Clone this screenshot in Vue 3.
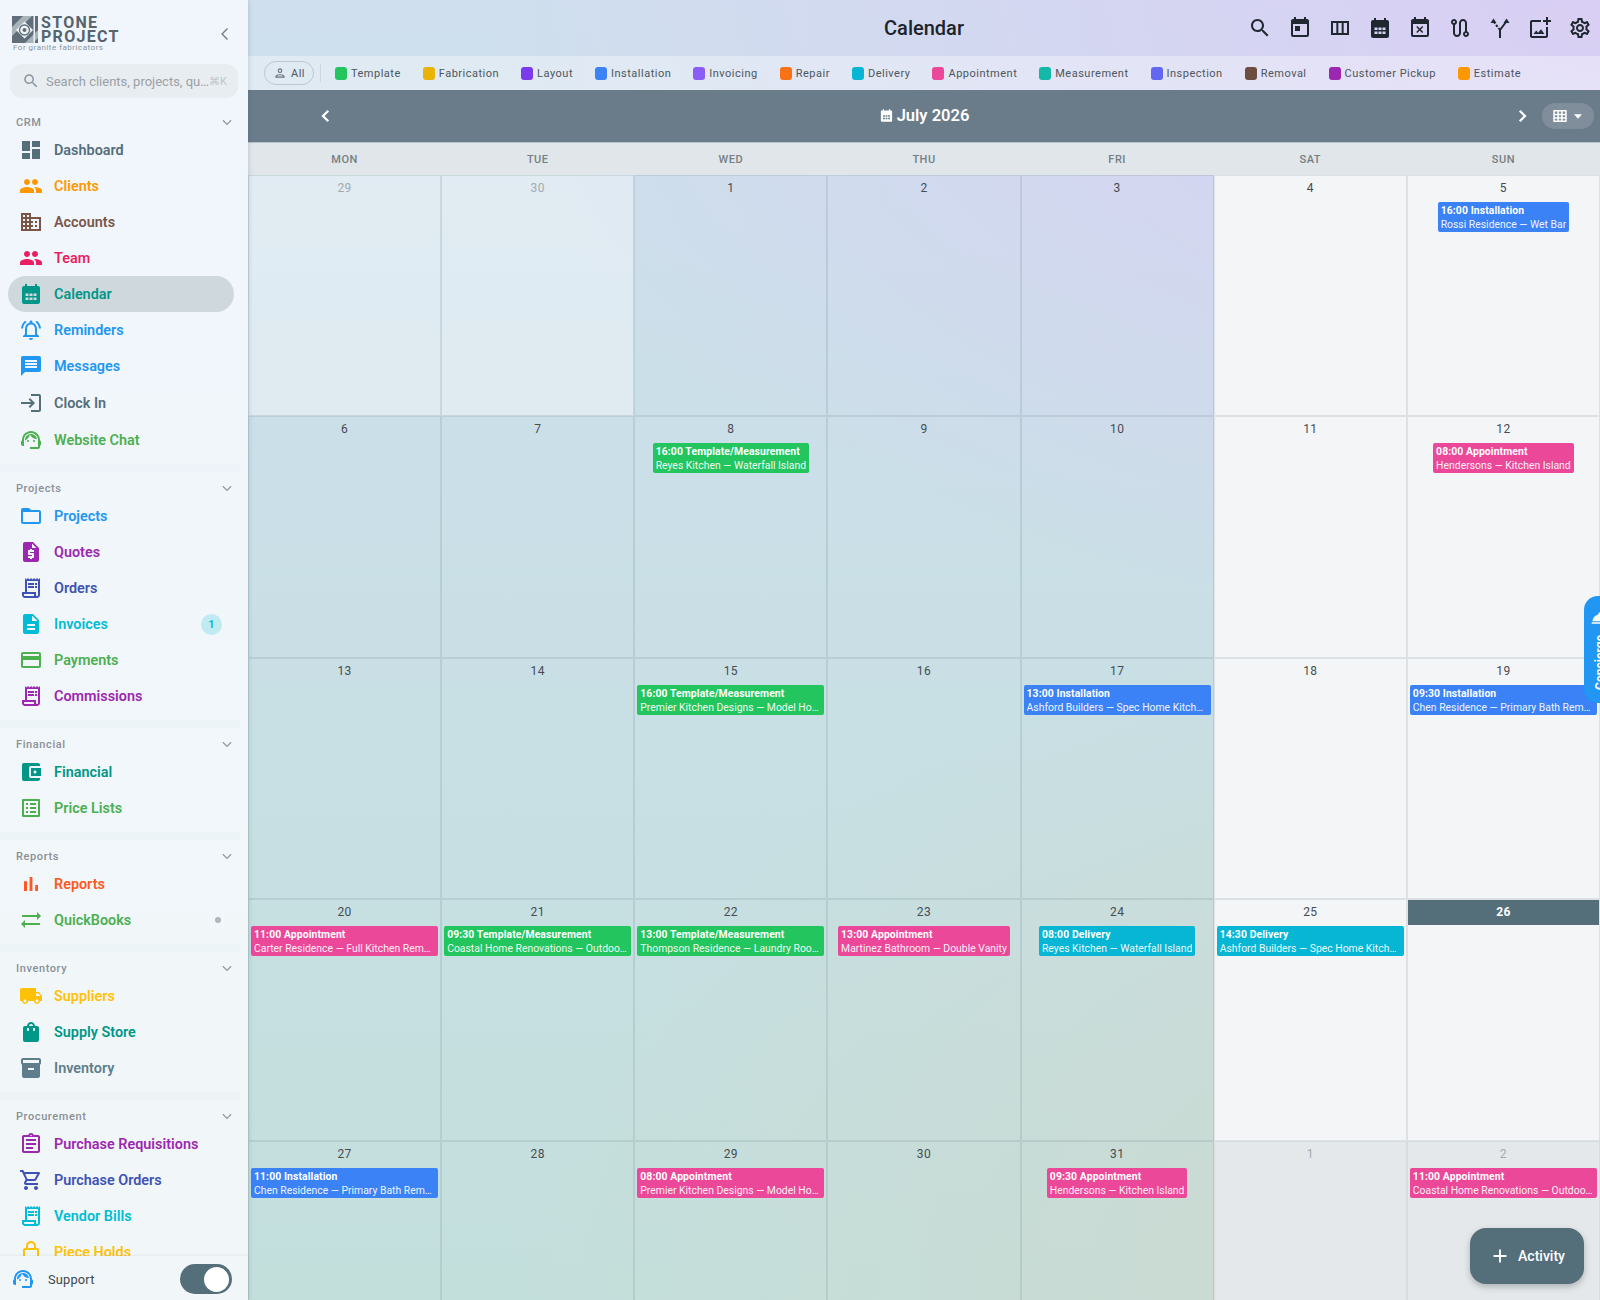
<template>
  <div class="app">
    <aside class="sidebar">
      <div class="brand">
        <svg class="logo-mark" width="26" height="27" viewBox="0 0 26 27">
          <rect width="26" height="27" fill="#5f6e78" />
          <path d="M0 11 11 0h9L0 20z" fill="#a9b3ba" />
          <path d="M26 14 13 27h8l5-5z" fill="#a9b3ba" />
          <path d="M12.500 5.500 21 14l-8.500 8.500L4 14z" fill="#eef3f7" />
          <path d="M21.500 0h1.500v27h-1.500z" fill="#eef3f7" />
          <circle cx="12.500" cy="14" r="5" fill="none" stroke="#5f6e78" stroke-width="1.300" />
          <circle cx="12.500" cy="14" r="2" fill="#5f6e78" />
        </svg>
        <div class="wordmark">
          <span>STONE</span>
          <span>PROJECT</span>
        </div>
        <div class="tagline">For granite fabricators</div>
        <svg class="collapse" width="20" height="20" viewBox="0 0 24 24"><path d="M15 5.500 8.500 12l6.500 6.500" fill="none" stroke="#78868f" stroke-width="1.800" /></svg>
      </div>
      <div class="search">
        <svg width="18" height="18" viewBox="0 0 24 24"><path :d="icons.search" fill="#8c979e" /></svg>
        <span class="search-text">Search clients, projects, quotes, orders</span>
        <span class="search-key">⌘K</span>
      </div>
      <nav class="nav">
        <section v-for="(group, i) in groups" :key="group.title" class="group">
          <div v-if="i > 0" class="sep"></div>
          <div class="group-head">
            <span>{{ group.title }}</span>
            <svg width="14" height="14" viewBox="0 0 24 24"><path d="M5 9l7 7 7-7" fill="none" stroke="#8c979e" stroke-width="2" /></svg>
          </div>
          <a
            v-for="item in group.items"
            :key="item.label"
            class="row"
            :class="{ active: item.active, tall: item.tall }"
            :style="{ color: item.color }"
          >
            <svg class="row-icon" width="24" height="24" viewBox="0 0 24 24"><path :d="icons[item.icon]" fill="currentColor" fill-rule="evenodd" /></svg>
            <span class="row-label">{{ item.label }}</span>
            <span v-if="item.badge" class="badge">{{ item.badge }}</span>
            <span v-if="item.dot" class="dot"></span>
          </a>
        </section>
      </nav>
      <div class="support">
        <svg width="24" height="24" viewBox="0 0 24 24"><path :d="icons.agent" fill="#2196f3" /></svg>
        <span class="support-label">Support</span>
        <span class="toggle"><i></i></span>
      </div>
    </aside>

    <main class="main">
      <header class="topbar">
        <div></div>
        <h1>Calendar</h1>
        <div class="tools">
          <button v-for="t in toolIcons" :key="t" type="button" class="tool">
            <svg width="24" height="24" viewBox="0 0 24 24"><path :d="icons[t]" fill="#1f2830" fill-rule="evenodd" /></svg>
          </button>
          <button type="button" class="tool">
            <svg width="24" height="24" viewBox="0 0 24 24" fill="none" stroke="#1f2830" stroke-width="2">
              <path d="M12 22v-8l6-8" />
              <path d="M12 14 6 6" stroke-dasharray="2.500 1.500" />
              <path d="M18.500 2.500 21.500 7h-6z" fill="#1f2830" stroke="none" />
              <path d="M5.500 2.500 8.500 7h-6z" fill="#1f2830" stroke="none" />
            </svg>
          </button>
          <button v-for="t in toolIconsEnd" :key="t" type="button" class="tool">
            <svg width="24" height="24" viewBox="0 0 24 24"><path :d="icons[t]" fill="#1f2830" /></svg>
          </button>
        </div>
      </header>

      <div class="filters">
        <span class="all-chip">
          <svg width="14" height="14" viewBox="0 0 24 24"><path d="M12 6a2 2 0 1 1 0 4 2 2 0 0 1 0-4m0-2a4 4 0 1 0 0 8 4 4 0 0 0 0-8zm0 10c-2.700 0-8 1.300-8 4v2h16v-2c0-2.700-5.300-4-8-4zm-6 4c.2-.7 3.300-2 6-2s5.800 1.300 6 2z" fill="#66737c" /></svg>
          All
        </span>
        <span class="filter-sep"></span>
        <span v-for="f in filters" :key="f.label" class="chip">
          <i :style="{ background: f.color }"></i>{{ f.label }}
        </span>
      </div>

      <div class="monthbar">
        <svg class="month-prev" width="18" height="18" viewBox="0 0 24 24"><path d="M15 5l-7 7 7 7" fill="none" stroke="#fff" stroke-width="3" /></svg>
        <div class="month-title">
          <svg width="15" height="15" viewBox="0 0 24 24"><path :d="icons.calendarFull" fill="#fff" fill-rule="evenodd" /></svg>
          July 2026
        </div>
        <svg class="month-next" width="18" height="18" viewBox="0 0 24 24"><path d="M9 5l7 7-7 7" fill="none" stroke="#fff" stroke-width="3" /></svg>
        <div class="view-switch">
          <svg width="18" height="18" viewBox="0 0 24 24"><path d="M4 4h16a1 1 0 0 1 1 1v14a1 1 0 0 1-1 1H4a1 1 0 0 1-1-1V5a1 1 0 0 1 1-1zm1 2v3h3.500V6zm5.500 0v3h3V6zm5 0v3H19V6zM5 11v2.500h3.500V11zm5.500 0v2.500h3V11zm5 0v2.500H19V11zM5 15.500V18h3.500v-2.500zm5.500 0V18h3v-2.500zm5 0V18H19v-2.500z" fill="#fff" fill-rule="evenodd" /></svg>
          <svg width="16" height="16" viewBox="0 0 24 24"><path d="M6 9.500h12L12 16z" fill="#fff" /></svg>
        </div>
      </div>

      <div class="weekdays">
        <div v-for="d in weekdays" :key="d">{{ d }}</div>
      </div>

      <div class="grid">
        <div v-for="c in cells" :key="c.key" class="cell" :class="c.kind">
          <div class="day" :class="{ today: c.today }">{{ c.day }}</div>
          <div v-if="c.event" class="event" :style="{ background: c.event.color }">
            <div class="event-title">{{ c.event.title }}</div>
            <div class="event-sub">{{ c.event.sub }}</div>
          </div>
        </div>
      </div>

      <button type="button" class="concierge">
        <svg width="20" height="20" viewBox="0 0 24 24"><path :d="icons.bell" fill="#fff" /></svg>
        <span>Concierge</span>
      </button>

      <button type="button" class="fab">
        <svg width="22" height="22" viewBox="0 0 24 24"><path d="M19 13h-6v6h-2v-6H5v-2h6V5h2v6h6z" fill="#fff" /></svg>
        Activity
      </button>
    </main>
  </div>
</template>

<script setup>
const icons = {
  search: 'M15.5 14h-.79l-.28-.27C15.41 12.59 16 11.11 16 9.5 16 5.91 13.09 3 9.5 3S3 5.91 3 9.5 5.91 16 9.5 16c1.61 0 3.09-.59 4.23-1.57l.27.28v.79l5 4.99L20.49 19l-4.99-5zm-6 0C7.01 14 5 11.99 5 9.5S7.01 5 9.5 5 14 7.01 14 9.5 11.99 14 9.5 14z',
  dashboard: 'M3 13h8V3H3v10zm0 8h8v-6H3v6zm10 0h8V11h-8v10zm0-18v6h8V3h-8z',
  people: 'M16 11c1.66 0 2.99-1.34 2.99-3S17.66 5 16 5c-1.66 0-3 1.34-3 3s1.34 3 3 3zm-8 0c1.66 0 2.99-1.34 2.99-3S9.66 5 8 5C6.34 5 5 6.34 5 8s1.34 3 3 3zm0 2c-2.33 0-7 1.17-7 3.5V19h14v-2.500c0-2.330-4.670-3.500-7-3.500zm8 0c-.29 0-.62.02-.97.05 1.16.84 1.97 1.970 1.970 3.450V19h6v-2.500c0-2.330-4.670-3.500-7-3.500z',
  domain: 'M12 7V3H2v18h20V7H12zM6 19H4v-2h2v2zm0-4H4v-2h2v2zm0-4H4V9h2v2zm0-4H4V5h2v2zm4 12H8v-2h2v2zm0-4H8v-2h2v2zm0-4H8V9h2v2zm0-4H8V5h2v2zm10 12h-8v-2h2v-2h-2v-2h2v-2h-2V9h8v10zm-2-8h-2v2h2v-2zm0 4h-2v2h2v-2z',
  calendarFull: 'M19 4h-1V2h-2v2H8V2H6v2H5c-1.100 0-2 .9-2 2v14c0 1.100.9 2 2 2h14c1.100 0 2-.9 2-2V6c0-1.100-.9-2-2-2zM9.500 14h-3v-2.500h3V14zm4 0h-3v-2.500h3V14zm4 0h-3v-2.500h3V14zm-8 4h-3v-2.500h3V18zm4 0h-3v-2.500h3V18zm4 0h-3v-2.500h3V18z',
  alarm: 'M7.580 4.080L6.150 2.650C3.750 4.480 2.170 7.300 2.030 10.500h2c.15-2.650 1.510-4.970 3.550-6.420zm12.390 6.420h2c-.15-3.200-1.730-6.020-4.120-7.850l-1.420 1.430c2.020 1.450 3.390 3.770 3.540 6.420zM18 11c0-3.070-1.640-5.640-4.500-6.320V4c0-.83-.67-1.500-1.500-1.500s-1.500.67-1.500 1.500v.68C7.630 5.360 6 7.920 6 11v5l-2 2v1h16v-1l-2-2v-5zm-2 6H8v-6c0-2.480 1.510-4.500 4-4.500s4 2.020 4 4.500v6zm-4 5c.14 0 .27-.01.4-.04.65-.14 1.180-.58 1.440-1.180.1-.24.15-.5.15-.78h-4c.01 1.100.9 2 2.010 2z',
  message: 'M20 2H4c-1.100 0-1.990.9-1.990 2L2 22l4-4h14c1.100 0 2-.9 2-2V4c0-1.100-.9-2-2-2zm-2 12H6v-2h12v2zm0-3H6V9h12v2zm0-3H6V6h12v2z',
  login: 'M11 7L9.600 8.400l2.600 2.600H2v2h10.200l-2.600 2.600L11 17l5-5-5-5zm9 12h-8v2h8c1.100 0 2-.9 2-2V5c0-1.100-.9-2-2-2h-8v2h8v14z',
  agent: 'M21 12.220C21 6.730 16.740 3 12 3c-4.690 0-9 3.650-9 9.280-.6.34-1 .98-1 1.720v2c0 1.100.9 2 2 2h1v-6.100c0-3.870 3.130-7 7-7s7 3.130 7 7V19h-8v2h8c1.100 0 2-.9 2-2v-1.220c.59-.31 1-.92 1-1.620v-2.300c0-.67-.41-1.280-1-1.640zM9 12a1 1 0 1 0 0 2 1 1 0 0 0 0-2zm6 0a1 1 0 1 0 0 2 1 1 0 0 0 0-2zM18 11.030C17.520 8.180 15.040 6 12.050 6c-3.030 0-6.290 2.510-6.030 6.450 2.470-1.010 4.330-3.210 4.860-5.890 1.310 2.630 4 4.440 7.120 4.470z',
  folder: 'M20 6h-8l-2-2H4c-1.100 0-1.990.9-1.990 2L2 18c0 1.100.9 2 2 2h16c1.100 0 2-.9 2-2V8c0-1.100-.9-2-2-2zm0 12H4V8h16v10z',
  quote: 'M14 2H6c-1.100 0-1.990.9-1.990 2L4 20c0 1.100.89 2 1.990 2H18c1.100 0 2-.9 2-2V8l-6-6zm1 10h-4v1h3c.55 0 1 .45 1 1v3c0 .55-.45 1-1 1h-1v1h-2v-1H9v-2h4v-1h-3c-.55 0-1-.45-1-1v-3c0-.55.45-1 1-1h1V9h2v1h2v2zm-2-4V3.500L17.500 8H13z',
  receipt: 'M19.500 3.500L18 2l-1.500 1.500L15 2l-1.500 1.500L12 2l-1.500 1.500L9 2 7.500 3.500 6 2v14H3v3c0 1.660 1.340 3 3 3h12c1.660 0 3-1.340 3-3V2l-1.500 1.500zM15 20H6c-.55 0-1-.45-1-1v-1h10v2zm4-1c0 .55-.45 1-1 1s-1-.45-1-1v-3H8V5h11v14zM9 7h6v2H9zM16 7h2v2h-2zM9 10h6v2H9zM16 10h2v2h-2z',
  description: 'M14 2H6c-1.100 0-1.990.9-1.990 2L4 20c0 1.100.89 2 1.990 2H18c1.100 0 2-.9 2-2V8l-6-6zm2 16H8v-2h8v2zm0-4H8v-2h8v2zm-3-5V3.500L18.500 9H13z',
  card: 'M20 4H4c-1.110 0-1.990.89-1.990 2L2 18c0 1.110.89 2 2 2h16c1.110 0 2-.89 2-2V6c0-1.110-.89-2-2-2zm0 14H4v-6h16v6zm0-10H4V6h16v2z',
  wallet: 'M21 18v1c0 1.100-.9 2-2 2H5c-1.110 0-2-.9-2-2V5c0-1.100.89-2 2-2h14c1.100 0 2 .9 2 2v1h-9c-1.110 0-2 .9-2 2v8c0 1.100.89 2 2 2h9zm-9-2h10V8H12v8zm4-2.500c-.83 0-1.500-.67-1.500-1.500s.67-1.500 1.500-1.500 1.500.67 1.500 1.500-.67 1.500-1.500 1.500z',
  listAlt: 'M19 5v14H5V5h14m1.100-2H3.900c-.5 0-.9.4-.9.9v16.200c0 .4.4.9.9.9h16.200c.4 0 .9-.5.9-.9V3.900c0-.5-.5-.9-.9-.9zM11 7h6v2h-6V7zm0 4h6v2h-6v-2zm0 4h6v2h-6zM7 7h2v2H7zm0 4h2v2H7zm0 4h2v2H7z',
  bars: 'M5 9.200h3V19H5zM10.600 5h2.800v14h-2.800zm5.600 8H19v6h-2.800z',
  sync: 'M22 8l-4-4v3H3v2h15v3l4-4zM2 16l4 4v-3h15v-2H6v-3l-4 4z',
  truck: 'M20 8h-3V4H3c-1.100 0-2 .9-2 2v11h2c0 1.660 1.340 3 3 3s3-1.340 3-3h6c0 1.660 1.340 3 3 3s3-1.340 3-3h2v-5l-3-4zM6 18.500c-.83 0-1.500-.67-1.500-1.500s.67-1.500 1.500-1.500 1.500.67 1.500 1.500-.67 1.500-1.500 1.500zm13.500-9l1.960 2.500H17V9.500h2.500zm-1.500 9c-.83 0-1.500-.67-1.500-1.500s.67-1.500 1.500-1.500 1.500.67 1.500 1.500-.67 1.500-1.500 1.500z',
  bag: 'M18 6h-2c0-2.210-1.790-4-4-4S8 3.790 8 6H6c-1.100 0-2 .9-2 2v12c0 1.100.9 2 2 2h12c1.100 0 2-.9 2-2V8c0-1.100-.9-2-2-2zm-8 4c0 .55-.45 1-1 1s-1-.45-1-1V8h2v2zm2-6c1.100 0 2 .9 2 2h-4c0-1.100.9-2 2-2zm4 6c0 .55-.45 1-1 1s-1-.45-1-1V8h2v2z',
  box: 'M20 2H4c-1 0-2 .9-2 2v3.010c0 .72.43 1.340 1 1.690V20c0 1.100 1.100 2 2 2h14c.9 0 2-.9 2-2V8.700c.57-.35 1-.97 1-1.690V4c0-1.100-1-2-2-2zm-5 12H9v-2h6v2zm5-7H4V4h16v3z',
  assignment: 'M19 3h-4.180C14.400 1.840 13.300 1 12 1s-2.400.84-2.820 2H5c-.14 0-.27.01-.4.04-.39.08-.74.28-1.010.55-.18.18-.33.4-.43.64-.1.23-.16.49-.16.77v14c0 .27.06.54.16.78s.25.45.43.64c.27.27.62.47 1.010.55.13.02.26.03.4.03h14c1.100 0 2-.9 2-2V5c0-1.100-.9-2-2-2zm-7-.25c.41 0 .75.34.75.75s-.34.75-.75.75-.75-.34-.75-.75.34-.75.75-.75zM19 19H5V5h14v14zM7 15h7v2H7zm0-4h10v2H7zm0-4h10v2H7z',
  cart: 'M15.550 13c.75 0 1.410-.41 1.750-1.030l3.580-6.490c.37-.66-.11-1.480-.87-1.480H5.210l-.94-2H1v2h2l3.600 7.590-1.350 2.440C4.520 15.370 5.480 17 7 17h12v-2H7l1.100-2h7.450zM6.160 6h12.150l-2.760 5H8.530L6.160 6zM7 18c-1.100 0-1.990.9-1.990 2S5.900 22 7 22s2-.9 2-2-.9-2-2-2zm10 0c-1.100 0-1.990.9-1.990 2s.89 2 1.990 2 2-.9 2-2-.9-2-2-2z',
  lock: 'M18 8h-1V6c0-2.760-2.240-5-5-5S7 3.240 7 6v2H6c-1.100 0-2 .9-2 2v10c0 1.100.9 2 2 2h12c1.100 0 2-.9 2-2V10c0-1.100-.9-2-2-2zM9 6c0-1.660 1.340-3 3-3s3 1.340 3 3v2H9V6zm9 14H6V10h12v10z',
  today: 'M19 3h-1V1h-2v2H8V1H6v2H5c-1.110 0-1.990.9-1.990 2L3 19c0 1.100.89 2 2 2h14c1.100 0 2-.9 2-2V5c0-1.100-.9-2-2-2zm0 16H5V8h14v11zM7 10h5v5H7z',
  columns: 'M3 5v14h18V5H3zm5.330 12H5V7h3.330v10zm5.340 0h-3.340V7h3.340v10zM19 17h-3.330V7H19v10z',
  eventBusy: 'M9.310 17l2.440-2.440L14.190 17l1.060-1.060-2.440-2.440 2.440-2.440L14.190 10l-2.440 2.440L9.310 10l-1.060 1.060 2.440 2.440-2.440 2.440L9.310 17zM19 3h-1V1h-2v2H8V1H6v2H5c-1.110 0-1.990.9-1.990 2L3 19c0 1.100.89 2 2 2h14c1.100 0 2-.9 2-2V5c0-1.100-.9-2-2-2zm0 16H5V8h14v11z',
  route: 'M19 15.180V7c0-2.210-1.790-4-4-4s-4 1.790-4 4v10c0 1.100-.9 2-2 2s-2-.9-2-2V8.820C8.160 8.400 9 7.300 9 6c0-1.660-1.340-3-3-3S3 4.340 3 6c0 1.300.84 2.400 2 2.820V17c0 2.210 1.790 4 4 4s4-1.790 4-4V7c0-1.100.9-2 2-2s2 .9 2 2v8.180c-1.160.41-2 1.510-2 2.820 0 1.660 1.340 3 3 3s3-1.340 3-3c0-1.300-.84-2.400-2-2.820zM6 7c-.55 0-1-.45-1-1s.45-1 1-1 1 .45 1 1-.45 1-1 1zm12 12c-.55 0-1-.45-1-1s.45-1 1-1 1 .45 1 1-.45 1-1 1z',
  addPhoto: 'M18 20H4V6h9V4H4c-1.100 0-2 .9-2 2v14c0 1.100.9 2 2 2h14c1.100 0 2-.9 2-2v-9h-2v9zm-7.790-3.170l-1.960-2.360L5.500 18h11l-3.540-4.710zM20 4V1h-2v3h-3c.01.01 0 2 0 2h3v2.990c.01.01 2 0 2 0V6h3V4h-3z',
  settings: 'M19.430 12.980c.04-.32.07-.64.07-.98 0-.34-.03-.66-.07-.98l2.110-1.650c.19-.15.24-.42.12-.64l-2-3.460c-.09-.16-.26-.25-.44-.25-.06 0-.12.01-.17.03l-2.490 1c-.52-.4-1.080-.73-1.690-.98l-.38-2.650C14.460 2.180 14.250 2 14 2h-4c-.25 0-.46.18-.49.42l-.38 2.650c-.61.25-1.170.59-1.690.98l-2.490-1c-.06-.02-.12-.03-.18-.03-.17 0-.34.09-.43.25l-2 3.460c-.13.22-.07.49.12.64l2.110 1.650c-.04.32-.07.65-.07.98 0 .33.03.66.07.98l-2.110 1.650c-.19.15-.24.42-.12.64l2 3.460c.09.16.26.25.44.25.06 0 .12-.01.17-.03l2.490-1c.52.4 1.080.73 1.690.98l.38 2.650c.03.24.24.42.49.42h4c.25 0 .46-.18.49-.42l.38-2.650c.61-.25 1.170-.59 1.690-.98l2.490 1c.06.02.12.03.18.03.17 0 .34-.09.43-.25l2-3.460c.12-.22.07-.49-.12-.64l-2.110-1.650zm-1.980-1.710c.04.31.05.52.05.73 0 .21-.02.43-.05.73l-.14 1.130.89.7 1.080.84-.7 1.210-1.270-.51-1.040-.42-.9.68c-.43.32-.84.56-1.250.73l-1.060.43-.16 1.130-.2 1.350h-1.400l-.19-1.350-.16-1.130-1.060-.43c-.43-.18-.83-.41-1.230-.71l-.91-.7-1.060.43-1.270.51-.7-1.210 1.080-.84.89-.7-.14-1.130c-.03-.31-.05-.54-.05-.74s.02-.43.05-.73l.14-1.130-.89-.7-1.080-.84.7-1.210 1.270.51 1.040.42.9-.68c.43-.32.84-.56 1.250-.73l1.060-.43.16-1.130.2-1.350h1.390l.19 1.350.16 1.130 1.060.43c.43.18.83.41 1.230.71l.91.7 1.060-.43 1.270-.51.7 1.210-1.070.85-.89.7.14 1.130zM12 8c-2.210 0-4 1.790-4 4s1.790 4 4 4 4-1.790 4-4-1.790-4-4-4zm0 6c-1.100 0-2-.9-2-2s.9-2 2-2 2 .9 2 2-.9 2-2 2z',
  bell: 'M2 17h20v2H2zm11.840-9.210c.1-.24.16-.51.16-.79 0-1.100-.9-2-2-2s-2 .9-2 2c0 .28.06.55.16.79C6.250 8.600 3.270 11.930 3 16h18c-.27-4.070-3.250-7.400-7.160-8.210z'
}

const groups = [
  { title: 'CRM', items: [
    { label: 'Dashboard', icon: 'dashboard', color: '#546e7a' },
    { label: 'Clients', icon: 'people', color: '#ff9800' },
    { label: 'Accounts', icon: 'domain', color: '#795548' },
    { label: 'Team', icon: 'people', color: '#e91e63' },
    { label: 'Calendar', icon: 'calendarFull', color: '#009688', active: true },
    { label: 'Reminders', icon: 'alarm', color: '#2196f3' },
    { label: 'Messages', icon: 'message', color: '#2196f3' },
    { label: 'Clock In', icon: 'login', color: '#546e7a', tall: true },
    { label: 'Website Chat', icon: 'agent', color: '#4caf50', tall: true }
  ] },
  { title: 'Projects', items: [
    { label: 'Projects', icon: 'folder', color: '#2196f3' },
    { label: 'Quotes', icon: 'quote', color: '#9c27b0' },
    { label: 'Orders', icon: 'receipt', color: '#3f51b5' },
    { label: 'Invoices', icon: 'description', color: '#00bcd4', badge: 1 },
    { label: 'Payments', icon: 'card', color: '#4caf50' },
    { label: 'Commissions', icon: 'receipt', color: '#9c27b0' }
  ] },
  { title: 'Financial', items: [
    { label: 'Financial', icon: 'wallet', color: '#009688' },
    { label: 'Price Lists', icon: 'listAlt', color: '#4caf50' }
  ] },
  { title: 'Reports', items: [
    { label: 'Reports', icon: 'bars', color: '#ff5722' },
    { label: 'QuickBooks', icon: 'sync', color: '#4caf50', dot: true }
  ] },
  { title: 'Inventory', items: [
    { label: 'Suppliers', icon: 'truck', color: '#ffc107' },
    { label: 'Supply Store', icon: 'bag', color: '#009688' },
    { label: 'Inventory', icon: 'box', color: '#607d8b' }
  ] },
  { title: 'Procurement', items: [
    { label: 'Purchase Requisitions', icon: 'assignment', color: '#9c27b0' },
    { label: 'Purchase Orders', icon: 'cart', color: '#3f51b5' },
    { label: 'Vendor Bills', icon: 'receipt', color: '#00bcd4' },
    { label: 'Piece Holds', icon: 'lock', color: '#ffc107' }
  ] }
]

const toolIcons = ['search', 'today', 'columns', 'calendarFull', 'eventBusy', 'route']
const toolIconsEnd = ['addPhoto', 'settings']

const filters = [
  { label: 'Template', color: '#22c55e' },
  { label: 'Fabrication', color: '#eab308' },
  { label: 'Layout', color: '#7c3aed' },
  { label: 'Installation', color: '#3b82f6' },
  { label: 'Invoicing', color: '#8b5cf6' },
  { label: 'Repair', color: '#f97316' },
  { label: 'Delivery', color: '#06b6d4' },
  { label: 'Appointment', color: '#ec4899' },
  { label: 'Measurement', color: '#14b8a6' },
  { label: 'Inspection', color: '#6366f1' },
  { label: 'Removal', color: '#6d4c41' },
  { label: 'Customer Pickup', color: '#9c27b0' },
  { label: 'Estimate', color: '#ff9800' }
]

const weekdays = ['MON', 'TUE', 'WED', 'THU', 'FRI', 'SAT', 'SUN']

const BLUE = '#3b82f6'
const PINK = '#ec4899'
const GREEN = '#22c55e'
const CYAN = '#06b6d4'

const events = {
  5: { color: BLUE, title: '16:00 Installation', sub: 'Rossi Residence — Wet Bar' },
  8: { color: GREEN, title: '16:00 Template/Measurement', sub: 'Reyes Kitchen — Waterfall Island' },
  12: { color: PINK, title: '08:00 Appointment', sub: 'Hendersons — Kitchen Island' },
  15: { color: GREEN, title: '16:00 Template/Measurement', sub: 'Premier Kitchen Designs — Model Home Kitchen' },
  17: { color: BLUE, title: '13:00 Installation', sub: 'Ashford Builders — Spec Home Kitchen Counters' },
  19: { color: BLUE, title: '09:30 Installation', sub: 'Chen Residence — Primary Bath Remodel' },
  20: { color: PINK, title: '11:00 Appointment', sub: 'Carter Residence — Full Kitchen Remodel' },
  21: { color: GREEN, title: '09:30 Template/Measurement', sub: 'Coastal Home Renovations — Outdoor Kitchen' },
  22: { color: GREEN, title: '13:00 Template/Measurement', sub: 'Thompson Residence — Laundry Room Counter' },
  23: { color: PINK, title: '13:00 Appointment', sub: 'Martinez Bathroom — Double Vanity' },
  24: { color: CYAN, title: '08:00 Delivery', sub: 'Reyes Kitchen — Waterfall Island' },
  25: { color: CYAN, title: '14:30 Delivery', sub: 'Ashford Builders — Spec Home Kitchen Counters' },
  27: { color: BLUE, title: '11:00 Installation', sub: 'Chen Residence — Primary Bath Remodel' },
  29: { color: PINK, title: '08:00 Appointment', sub: 'Premier Kitchen Designs — Model Home Kitchen' },
  31: { color: PINK, title: '09:30 Appointment', sub: 'Hendersons — Kitchen Island' }
}

// 29 and 30 June lead the grid, 1 and 2 August trail it
const cells = [
  { key: 'j29', day: 29, kind: 'before' },
  { key: 'j30', day: 30, kind: 'before' }
]
for (let d = 1; d <= 31; d++) {
  const col = (d + 1) % 7 // 0 = monday
  cells.push({
    key: 'd' + d,
    day: d,
    kind: col >= 5 ? 'weekend' : '',
    today: d === 26,
    event: events[d]
  })
}
cells.push({ key: 'a1', day: 1, kind: 'after' })
cells.push({
  key: 'a2',
  day: 2,
  kind: 'after',
  event: { color: PINK, title: '11:00 Appointment', sub: 'Coastal Home Renovations — Outdoor Kitchen' }
})
</script>

<style>
html, body {
  margin: 0;
  height: 100%;
  overflow: hidden;
}
</style>

<style scoped>
.app {
  display: flex;
  height: 1300px;
  overflow: hidden;
  font-family: Roboto, "Liberation Sans", sans-serif;
  background:
    radial-gradient(1100px 650px at 100% 0, rgba(218, 205, 245, 0.9), rgba(218, 205, 245, 0)),
    radial-gradient(1100px 700px at 100% 100%, rgba(212, 212, 196, 0.6), rgba(212, 212, 196, 0)),
    linear-gradient(180deg, #cfdfee, #c3dfdc);
}

.sidebar {
  width: 248px;
  flex: none;
  display: flex;
  flex-direction: column;
  background: linear-gradient(180deg, #f1f6fd, #f1f7f8);
  box-shadow: 1px 0 4px rgba(60, 80, 100, 0.18);
  position: relative;
  z-index: 2;
}

.brand {
  height: 64px;
  flex: none;
  display: flex;
  position: relative;
  box-sizing: border-box;
  padding: 16px 0 0 12px;
}

.wordmark {
  display: flex;
  flex-direction: column;
  margin-left: 3px;
  font-size: 16px;
  line-height: 14px;
  font-weight: 700;
  color: #56646e;
  letter-spacing: 1.300px;
}

.tagline {
  position: absolute;
  left: 13px;
  top: 43px;
  font-size: 8px;
  line-height: 10px;
  letter-spacing: 0.500px;
  color: #8a959c;
}

.collapse {
  position: absolute;
  left: 215px;
  top: 24px;
}

.search {
  height: 34px;
  margin: 0 10px;
  padding: 0 11px 0 12px;
  flex: none;
  display: flex;
  align-items: center;
  gap: 6px;
  border-radius: 12px;
  background: #e8edf1;
  font-size: 13px;
  color: #9aa1a6;
}

.search-text {
  flex: 1;
  min-width: 0;
  white-space: nowrap;
  overflow: hidden;
  text-overflow: ellipsis;
}

.search-key {
  margin-left: -6px;
  font-size: 11px;
  color: #c0c5c9;
}

.nav {
  flex: 1;
  min-height: 0;
  overflow: hidden;
  margin-top: 14px;
}

.group {
  padding-bottom: 6px;
}

.sep {
  height: 8px;
  margin: 0 8px 6px 0;
  background: rgba(130, 150, 170, 0.03);
}

.group-head {
  height: 20px;
  display: flex;
  align-items: center;
  justify-content: space-between;
  padding: 0 14px 0 16px;
  font-size: 11px;
  font-weight: 500;
  letter-spacing: 0.600px;
  color: #8a9096;
}

.row {
  height: 36px;
  margin: 0 14px 0 8px;
  padding-left: 11px;
  display: flex;
  align-items: center;
  gap: 11px;
  border-radius: 18px;
  font-size: 14.400px;
  font-weight: 600;
  position: relative;
}

.row.tall {
  height: 37px;
  padding-top: 1px;
  box-sizing: border-box;
}

.row.active {
  background: #cfd8dc;
}

.row-icon {
  flex: none;
}

.badge {
  position: absolute;
  right: 12px;
  width: 21px;
  height: 21px;
  border-radius: 50%;
  background: rgba(0, 188, 212, 0.2);
  font-size: 11px;
  font-weight: 700;
  line-height: 21px;
  text-align: center;
}

.dot {
  position: absolute;
  right: 13px;
  width: 6px;
  height: 6px;
  border-radius: 50%;
  background: #b0b6ba;
}

.support {
  height: 44px;
  flex: none;
  box-sizing: border-box;
  display: flex;
  align-items: center;
  padding: 2px 16px 0 11px;
  background: #f1f6f8;
  box-shadow: 0 -1px 2px rgba(60, 80, 100, 0.08);
  position: relative;
}

.support-label {
  margin-left: 13px;
  flex: 1;
  font-size: 12.800px;
  letter-spacing: 0.200px;
  color: #3f474d;
}

.toggle {
  width: 52px;
  height: 30px;
  border-radius: 15px;
  background: #546e7a;
  display: flex;
  align-items: center;
  justify-content: flex-end;
  padding-right: 3px;
  box-sizing: border-box;
}

.toggle i {
  width: 25px;
  height: 25px;
  border-radius: 50%;
  background: #fff;
}

.main {
  flex: 1;
  min-width: 0;
  display: flex;
  flex-direction: column;
  position: relative;
  overflow: hidden;
}

.topbar {
  height: 56px;
  flex: none;
  display: grid;
  grid-template-columns: 1fr auto 1fr;
  align-items: center;
}

.topbar h1 {
  margin: 0;
  font-size: 20px;
  font-weight: 500;
  color: #1c2329;
}

.tools {
  display: flex;
  justify-content: flex-end;
}

.tool {
  width: 40px;
  height: 40px;
  padding: 0;
  border: 0;
  background: none;
  display: flex;
  align-items: center;
  justify-content: center;
}

.filters {
  height: 34px;
  flex: none;
  display: flex;
  align-items: center;
  padding-left: 16px;
  background: rgba(255, 255, 255, 0.35);
  font-size: 11px;
  letter-spacing: 0.500px;
  color: #4c565d;
}

.all-chip {
  height: 24px;
  width: 50px;
  box-sizing: border-box;
  display: flex;
  align-items: center;
  justify-content: center;
  gap: 4px;
  border: 1px solid #bcc8d0;
  border-radius: 13px;
}

.filter-sep {
  width: 1px;
  height: 18px;
  margin: 0 14px 0 6px;
  background: #cdd7de;
}

.chip {
  display: flex;
  align-items: center;
  gap: 4px;
  margin-right: 22px;
  white-space: nowrap;
}

.chip i {
  width: 12px;
  height: 13px;
  border-radius: 3px;
}

.monthbar {
  height: 52px;
  flex: none;
  position: relative;
  display: flex;
  align-items: center;
  justify-content: center;
  background: #6a7c8a;
  color: #fff;
}

.month-prev,
.month-next,
.view-switch {
  position: absolute;
}

.month-prev {
  left: 69px;
}

.month-next {
  right: 69px;
}

.month-title {
  display: flex;
  align-items: center;
  gap: 3px;
  padding-bottom: 1px;
  font-size: 16.500px;
  font-weight: 600;
}

.view-switch {
  right: 6px;
  width: 52px;
  height: 26px;
  border-radius: 13px;
  background: rgba(255, 255, 255, 0.14);
  display: flex;
  align-items: center;
  justify-content: center;
  gap: 1px;
}

.weekdays {
  height: 33px;
  flex: none;
  display: grid;
  grid-template-columns: repeat(7, 1fr);
  align-items: center;
  text-align: center;
  background: #e0e6e9;
  border-top: 1px solid #b6c2c9;
  box-sizing: border-box;
  font-size: 11px;
  font-weight: 500;
  letter-spacing: 0.500px;
  color: #757f85;
}

.grid {
  display: grid;
  grid-template-columns: repeat(7, 1fr);
  grid-auto-rows: 241.400px;
}

.cell {
  min-width: 0;
  border: 1px solid rgba(140, 160, 170, 0.28);
  text-align: center;
}

.cell.weekend {
  background: #f3f5f7;
  border-color: #dbe1e4;
}

.cell.before {
  background: rgba(255, 255, 255, 0.38);
}

.cell.after {
  background: #e4e8ea;
  border-color: #d7dcdf;
}

.day {
  height: 25px;
  line-height: 25px;
  font-size: 12px;
  letter-spacing: 0.400px;
  color: #454c52;
}

.before .day,
.after .day {
  color: #a3aaaf;
}

.day.today {
  background: #546e7a;
  color: #fff;
  font-weight: 700;
}

.event {
  display: inline-block;
  max-width: calc(100% - 4px);
  box-sizing: border-box;
  margin-top: 1px;
  padding: 2px 3px 0;
  border-radius: 2px;
  color: #fff;
  font-size: 10.400px;
  line-height: 14px;
  text-align: left;
  vertical-align: top;
}

.event-title {
  font-weight: 700;
  letter-spacing: 0.100px;
  white-space: nowrap;
  overflow: hidden;
  text-overflow: ellipsis;
}

.event-sub {
  white-space: nowrap;
  overflow: hidden;
  text-overflow: ellipsis;
  opacity: 0.92;
}

.concierge {
  position: absolute;
  top: 596px;
  right: -16px;
  width: 32px;
  height: 107px;
  padding: 12px 0 0;
  border: 0;
  border-radius: 14px 0 0 14px;
  background: #2196f3;
  color: #fff;
  display: flex;
  flex-direction: column;
  align-items: center;
  gap: 7px;
  font: 700 12px Roboto, sans-serif;
}

.concierge span {
  writing-mode: vertical-rl;
  transform: rotate(180deg);
}

.fab {
  position: absolute;
  right: 16px;
  bottom: 16px;
  width: 114px;
  height: 56px;
  padding: 0;
  border: 0;
  border-radius: 16px;
  background: #546e7a;
  color: #fff;
  display: flex;
  align-items: center;
  justify-content: center;
  gap: 7px;
  font: 500 14px Roboto, sans-serif;
  box-shadow: 0 3px 6px rgba(50, 60, 70, 0.3);
}
</style>
